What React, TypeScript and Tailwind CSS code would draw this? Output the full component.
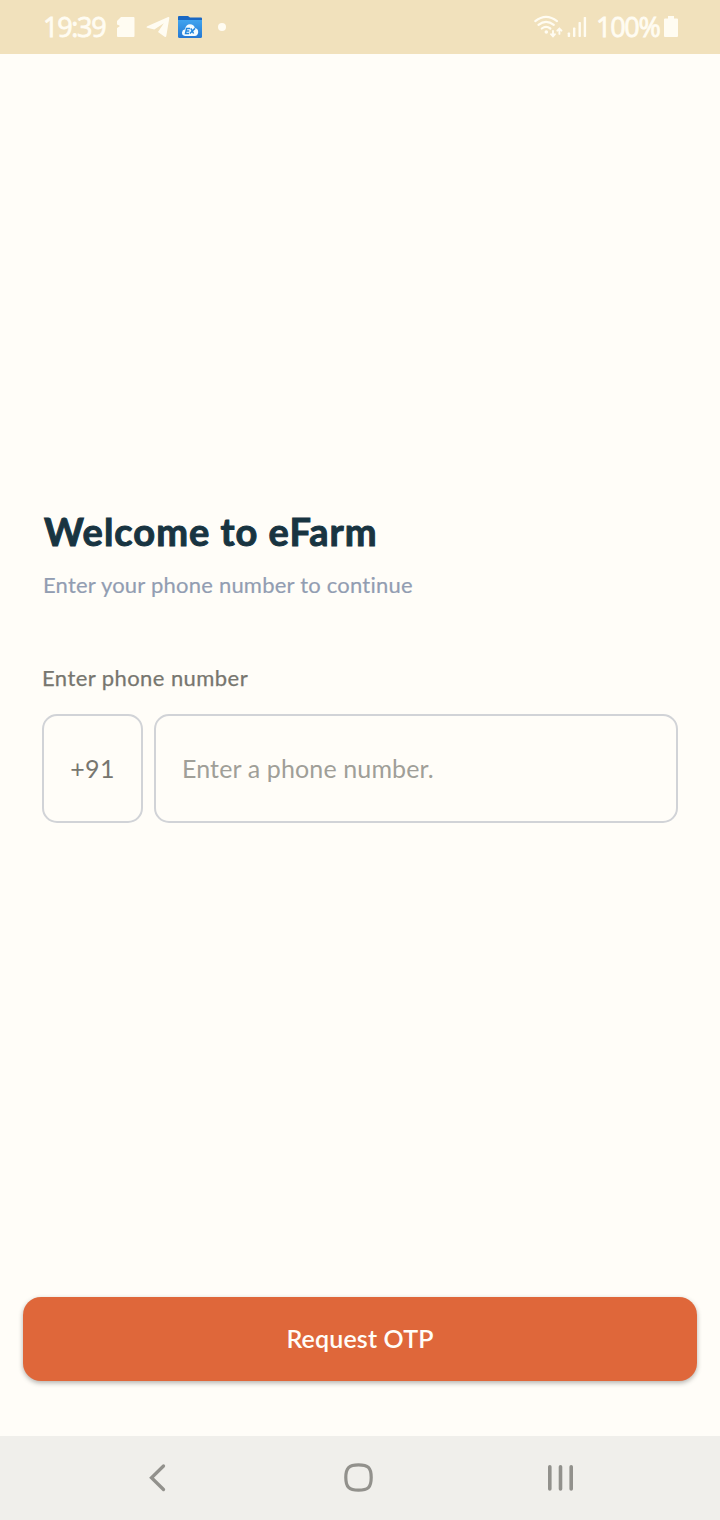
import React from "react";

function MemoryCardIcon() {
  return (
    <svg width="19" height="22" viewBox="0 0 19 22" className="ml-[11px]" fill="#fffcf2">
      <path d="M5 1H17.500Q18.500 1 18.500 2V20Q18.500 21 17.500 21H2Q1 21 1 20V12L3.500 10.500V9.500L1 8.500V5Z" />
    </svg>
  );
}

function TelegramIcon() {
  return (
    <svg width="24" height="22" viewBox="0 0 24 22" className="ml-[11px]" fill="#fffcf2">
      <path d="M22.200 1.100Q23.500 .8 23.300 2.200L20.300 20Q20 21.500 18.600 20.700L12 16L17.800 7.200L8.300 13.500L1.200 11.800Q-.2 11.200 1.300 10.300Z" />
    </svg>
  );
}

function ExFolderIcon() {
  return (
    <svg width="26" height="24" viewBox="0 0 26 24" className="ml-[7px]">
      <defs>
        <linearGradient id="folder" x1="0" y1="0" x2="0" y2="1">
          <stop offset="0" stopColor="#3fa4ef" />
          <stop offset="1" stopColor="#2578d3" />
        </linearGradient>
      </defs>
      <path d="M1 2Q1 1 2 1H11L13 2.500H24Q25 2.500 25 3.500V12H1Z" fill="#1967c3" />
      <path d="M1 5H25V21.500Q25 23 23.500 23H2.500Q1 23 1 21.500Z" fill="url(#folder)" />
      <path d="M8 21Q4.800 20.500 5 17.500Q5.200 14.800 8 14.200Q9 9.400 13 9.300Q17 9.400 17.800 13Q21.200 13.500 21.200 17.200Q20.800 20.600 17.800 21Z" fill="#f4fcff" />
      <path d="M13 13.400H9.600L8.500 18.500H12M9 15.900H12.300M13.800 13.400L16.600 18.500M18 13.400L12.800 18.500" fill="none" stroke="#2388df" strokeWidth="1.500" />
    </svg>
  );
}

function WifiIcon() {
  return (
    <svg width="30" height="24" viewBox="0 0 30 24" fill="none" stroke="#fffcf2" strokeWidth="2.200" strokeLinecap="round">
      <path d="M1.300 6.100Q12-2.400 23 6.100M4.500 9.900Q12 3.900 19.800 9.900M7.800 13.500Q12 10.300 16.300 13.500" />
      <circle cx="12.300" cy="17" r="1.800" fill="#fffcf2" stroke="none" />
      <path d="M19 16V21M17 19.200L19 21.300L21 19.200M25.400 18.900V13.800M23.300 15.700L25.400 13.600L27.500 15.700" strokeWidth="1.900" />
    </svg>
  );
}

function SignalIcon() {
  return (
    <svg width="20" height="22" viewBox="0 0 20 22" className="ml-[3px]" fill="#fffcf2">
      <rect x=".7" y="16.500" width="2.400" height="4.500" rx=".7" />
      <rect x="6" y="11.500" width="2.400" height="9.500" rx=".7" />
      <rect x="11.500" y="6" width="2.400" height="15" rx=".7" />
      <rect x="16.700" y="1" width="2.400" height="20" rx=".7" />
    </svg>
  );
}

function StatusBar() {
  return (
    <header className="flex h-[54px] shrink-0 items-center justify-between bg-[#f1e1bc] pr-[41px] pl-[43px] font-['Open_Sans',sans-serif] text-[27px] font-medium text-[#fffcf2] [-webkit-text-stroke:0.8px_#fffcf2]">
      <div className="flex items-center">
        <span className="w-[62px] whitespace-nowrap tracking-[-1.3px]">19:39</span>
        <MemoryCardIcon />
        <TelegramIcon />
        <ExFolderIcon />
        <span className="ml-[15px] h-2 w-2 rounded-full bg-[#fffcf2]" />
      </div>
      <div className="flex items-center">
        <WifiIcon />
        <SignalIcon />
        <span className="ml-[9px] w-[64px] whitespace-nowrap tracking-[-1.300px]">100%</span>
        <svg width="16" height="22" viewBox="0 0 16 22" className="ml-[3px]" fill="#fffcf2">
          <path d="M5 0H11V2.500H14Q15 2.500 15 3.500V20Q15 21 14 21H2Q1 21 1 20V3.500Q1 2.500 2 2.500H5Z" />
        </svg>
      </div>
    </header>
  );
}

function NavigationBar() {
  return (
    <nav className="flex h-[84px] shrink-0 items-center bg-[#f0efeb]">
      <button aria-label="Back" className="ml-[142px]">
        <svg width="30" height="32" viewBox="0 0 30 32" fill="none" stroke="#92918c" strokeWidth="3.300" strokeLinecap="round" strokeLinejoin="miter">
          <path d="M21.500 4L9.500 15.700L21.500 27.500" />
        </svg>
      </button>
      <button aria-label="Home" className="ml-[171px]">
        <svg width="32" height="32" viewBox="0 0 32 32" fill="none" stroke="#92918c" strokeWidth="3.200">
          <path d="M15.500 2.800C25 2.800 28.200 5.500 28.200 15.500S25 28.200 15.500 28.200S2.800 25 2.800 15.500S6 2.800 15.500 2.800Z" />
        </svg>
      </button>
      <button aria-label="Recent apps" className="ml-[169px]">
        <svg width="34" height="32" viewBox="0 0 34 32" fill="none" stroke="#92918c" strokeWidth="3.600" strokeLinecap="round">
          <path d="M5.800 4.700V27M16.500 4.700V27M27.200 4.700V27" />
        </svg>
      </button>
    </nav>
  );
}

export default function App() {
  return (
    <div className="flex h-[1520px] w-[720px] flex-col overflow-hidden bg-[#fffdf8] font-['Lato',sans-serif] [font-variant-ligatures:none]">
      <StatusBar />
      <main className="flex flex-1 flex-col">
        <section className="mt-[452px] px-[42px]">
          <h1 className="h-[50px] pl-[2px] text-[38px] leading-[50px] font-bold tracking-[1px] whitespace-nowrap text-[#183441] [-webkit-text-stroke:1px_#183441]">Welcome to eFarm</h1>
          <p className="mt-[14px] h-[30px] pl-px text-[22px] leading-[30px] tracking-[0.22px] whitespace-nowrap text-[#929db2] [-webkit-text-stroke:0.2px_#929db2]">Enter your phone number to continue</p>
          <label htmlFor="phone" className="mt-[63px] block h-[30px] text-[22px] leading-[30px] tracking-[0.43px] whitespace-nowrap text-[#77766f] [-webkit-text-stroke:0.25px_#77766f]">Enter phone number</label>
          <div className="mt-[21px] flex gap-[11px]">
            <div className="flex h-[109px] w-[101px] items-center justify-center rounded-[15px] border-2 border-[#d1d3d7] pt-px text-[25px] tracking-[0.3px] text-[#77766f]">+91</div>
            <input id="phone" type="tel" placeholder="Enter a phone number." className="h-[109px] min-w-0 flex-1 rounded-[15px] border-2 border-[#d1d3d7] bg-transparent px-[26px] pb-px text-[25px] tracking-[0.13px] text-[#77766f] outline-none placeholder:text-[#a09f98]" />
          </div>
        </section>
        <button className="mx-[23px] mt-auto mb-[55px] h-[84px] rounded-[18px] bg-[#df673a] text-[25px] font-semibold tracking-[0.15px] text-[#fffdf8] shadow-[0_2px_5px_rgba(0,0,0,0.3)]">Request OTP</button>
      </main>
      <NavigationBar />
    </div>
  );
}
